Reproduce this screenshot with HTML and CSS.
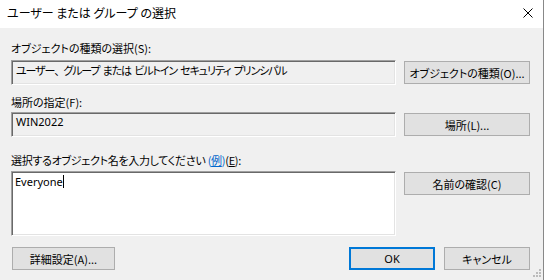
FILE: index.html
```html
<!DOCTYPE html>
<html lang="ja">
<head>
<meta charset="utf-8">
<title>ユーザー または グループ の選択</title>
<link rel="stylesheet" href="styles.css">
</head>
<body>
<div class="window">
  <div class="titlebar">
    <span class="title">ユーザー または グループ の選択</span>
    <svg class="close" width="10" height="10" viewBox="0 0 10 10"><path d="M0.5 0.5 L9.5 9.5 M9.5 0.5 L0.5 9.5" stroke="#000" stroke-width="1" fill="none"/></svg>
  </div>
  <div class="content">
    <div class="label l1">オブジェクトの種類の選択(S):</div>
    <div class="row">
      <div class="field narrow">ユーザー<span class="full">、</span>グループ または ビルトイン セキュリティ プリンシパル</div>
      <div class="btn">オブジェクトの種類(O)...</div>
    </div>
    <div class="label l2">場所の指定(F):</div>
    <div class="row">
      <div class="field latin">WIN2022</div>
      <div class="btn">場所(L)...</div>
    </div>
    <div class="label l3">選択するオブジェクト名を入力してください <span class="link">(<u>例</u>)</span>(<u>E</u>):</div>
    <div class="row">
      <div class="textarea latin">Everyone<span class="caret"></span></div>
      <div class="btn">名前の確認(C)</div>
    </div>
    <div class="footer">
      <div class="btn adv">詳細設定(A)...</div>
      <div class="spacer"></div>
      <div class="btn ok latin">OK</div>
      <div class="btn cancel">キャンセル</div>
    </div>
  </div>
  <svg class="grip" width="12" height="12" viewBox="0 0 12 12">
    <rect x="9" y="1" width="2" height="2" fill="#bcbcbc"/>
    <rect x="6" y="4" width="2" height="2" fill="#bcbcbc"/>
    <rect x="9" y="4" width="2" height="2" fill="#bcbcbc"/>
    <rect x="3" y="7" width="2" height="2" fill="#bcbcbc"/>
    <rect x="6" y="7" width="2" height="2" fill="#bcbcbc"/>
    <rect x="9" y="7" width="2" height="2" fill="#bcbcbc"/>
  </svg>
</div>
</body>
</html>
```

FILE: styles.css
```css
html, body {
  margin: 0;
  padding: 0;
}
body {
  width: 544px;
  height: 280px;
  overflow: hidden;
  background: #f0f0f0;
  font-family: "Noto Sans CJK JP", "Noto Sans", sans-serif;
  font-size: 11px;
  color: #000;
  font-feature-settings: "palt";
}
.window {
  position: relative;
  width: 544px;
  height: 280px;
  box-sizing: border-box;
  border-right: 1px solid #888888;
  background: #f0f0f0;
}
.titlebar {
  height: 28px;
  background: #ffffff;
  display: flex;
  align-items: center;
  justify-content: space-between;
  padding: 0 10px 2px 7px;
  box-sizing: border-box;
}
.title {
  font-size: 12px;
  line-height: 16px;
}
.close {
  display: block;
}
.content {
  padding: 12px 0 0 11px;
}
.label {
  line-height: 16px;
  height: 16px;
  white-space: nowrap;
}
.l1 { margin-bottom: 4px; }
.l2 { margin-top: 9px; margin-bottom: 2px; }
.l3 { margin-top: 15px; margin-bottom: 3px; letter-spacing: -0.3px; }
.link { color: #0066cc; }
.row {
  display: grid;
  grid-template-columns: 385px 126px;
  column-gap: 8px;
  align-items: start;
}
.field, .textarea {
  box-sizing: border-box;
  border-top: 1px solid #a0a0a0;
  border-left: 1px solid #a0a0a0;
  border-right: 1px solid #ffffff;
  border-bottom: 1px solid #ffffff;
  box-shadow: inset 1px 1px 0 #696969, inset -1px -1px 0 #e3e3e3;
  white-space: nowrap;
  overflow: hidden;
}
.field {
  height: 25px;
  background: #f0f0f0;
  padding: 1px 0 0 4px;
  line-height: 16px;
}
.narrow {
  letter-spacing: -1.1px;
  word-spacing: 1.8px;
}
.full {
  font-feature-settings: normal;
  letter-spacing: -2px;
}
.textarea {
  height: 65px;
  background: #ffffff;
  padding: 3px 0 0 3px;
  line-height: 14px;
}
.latin {
  font-family: "Noto Sans", "Noto Sans CJK JP", sans-serif;
  font-feature-settings: normal;
  font-size: 11px;
}
.caret {
  display: inline-block;
  width: 0;
  height: 13px;
  border-left: 1px solid #000;
  vertical-align: -2px;
}
.btn {
  box-sizing: border-box;
  height: 23px;
  margin-top: 1px;
  background: #e1e1e1;
  border: 1px solid #adadad;
  display: flex;
  align-items: center;
  justify-content: center;
  line-height: 16px;
  white-space: nowrap;
}
.footer {
  display: flex;
  align-items: start;
  margin-top: 10px;
  width: 519px;
}
.spacer { flex: 1; }
.adv {
  width: 103px;
  margin-left: 1px;
}
.ok {
  width: 86px;
  border: 2px solid #0078d7;
}
.cancel {
  width: 86px;
  margin-left: 9px;
}
.grip {
  position: absolute;
  right: 1px;
  bottom: 0;
}
```
